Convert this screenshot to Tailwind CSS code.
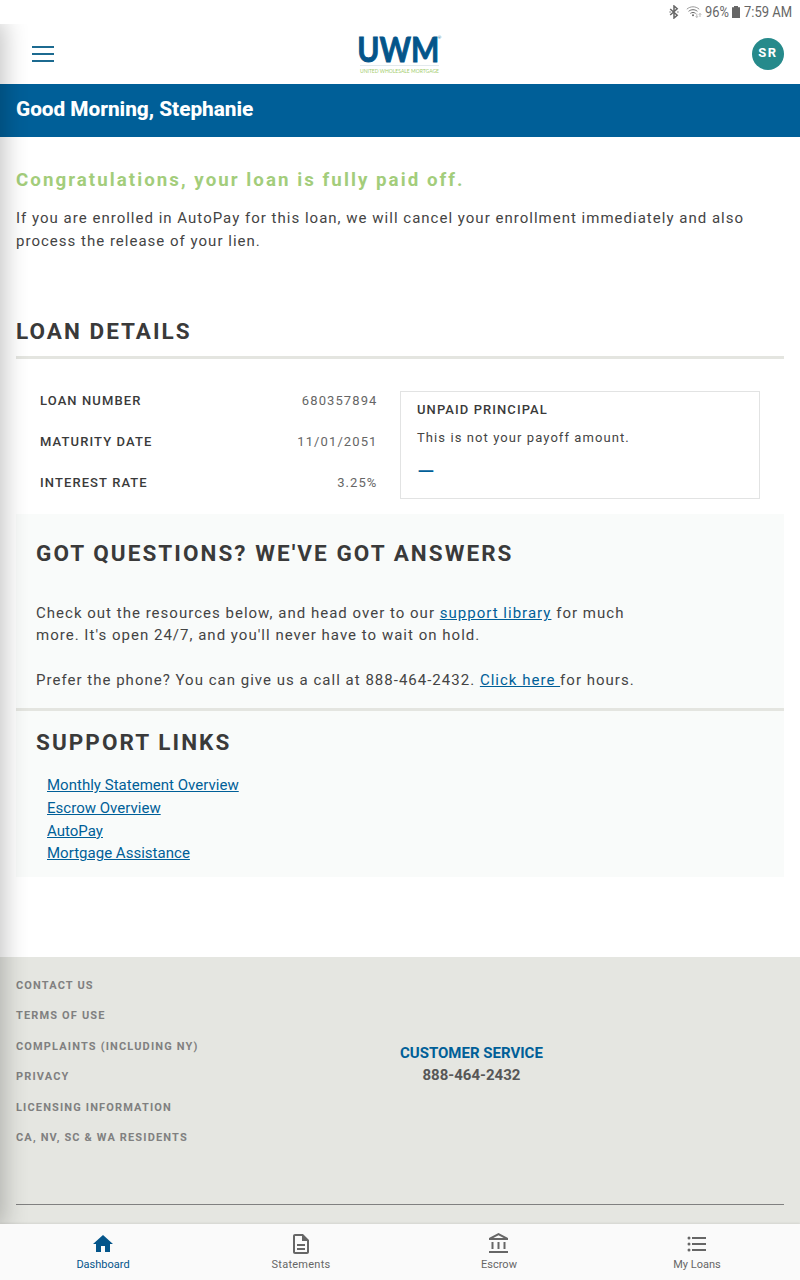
<!DOCTYPE html>
<html lang="en">
<head>
  <meta charset="UTF-8">
  <meta name="viewport" content="width=device-width, initial-scale=1.0">
  <title>UWM - Dashboard</title>
  <script src="https://cdn.jsdelivr.net/npm/@tailwindcss/browser@4"></script>
</head>
<body class="bg-white">
  <div class="relative flex flex-col w-[800px] h-[1280px] overflow-hidden font-['Roboto',sans-serif] text-[#3a3a3a]">

    <!-- Status bar -->
    <div class="flex h-6 shrink-0 items-center justify-end pr-2 text-[#666]">
      <svg class="w-[10px] h-[14px] mr-[7px]" viewBox="0 0 10 14" fill="none" stroke="currentColor" stroke-width="1.5">
        <path d="M1.2 4l7 6.2L5 13V1l3.2 2.8L1.2 10"/>
        <path d="M0.4 7h1.4M8.2 7h1.4" stroke-width="1.2"/>
      </svg>
      <svg class="w-4 h-[14px] mr-[3px]" viewBox="0 0 16 14" fill="none" stroke="currentColor" stroke-width="1">
        <path d="M0.8 4.2C4.5 1 9.5 1 13.2 4.2" stroke="#999"/>
        <path d="M2.6 6.3c2.6-2.1 6.2-2.1 8.8 0"/>
        <path d="M4.4 8.4c1.5-1.2 3.7-1.2 5.2 0"/>
        <circle cx="7" cy="10.3" r="1" fill="currentColor" stroke="none"/>
        <path d="M10.8 8.5v4M9.6 11.2l1.2 1.3 1.2-1.3M14 12V8.5M12.8 9.7L14 8.4l1.2 1.3" stroke="#aaa" stroke-width="0.8"/>
      </svg>
      <span class="inline-block w-6 text-[14px] leading-6 whitespace-nowrap"><span class="inline-block origin-left scale-x-[0.92]">96%</span></span>
      <svg class="w-2 h-3 ml-[3px] mr-1" viewBox="0 0 8 12" fill="currentColor"><path d="M2 0h4v1.2h2V12H0V1.2h2z"/></svg>
      <span class="inline-block w-12 text-[14px] leading-6 whitespace-nowrap"><span class="inline-block origin-left scale-x-[0.93]">7:59 AM</span></span>
    </div>

    <!-- Header -->
    <header class="flex h-[60px] shrink-0 items-center justify-between pl-8 pr-4">
      <div class="flex w-[22px] flex-col gap-[5px]">
        <span class="h-0.5 bg-[#1c6a90]"></span>
        <span class="h-0.5 bg-[#1c6a90]"></span>
        <span class="h-0.5 bg-[#1c6a90]"></span>
      </div>
      <svg class="w-[90px] h-[50px] -ml-[5px] overflow-visible" viewBox="-4 -5 90 50" font-family="Lato, sans-serif">
        <text x="-2.7" y="27.5" font-size="35" font-weight="700" fill="#04558a" stroke="#04558a" stroke-width="0.9" textLength="82" lengthAdjust="spacingAndGlyphs">UWM</text>
        <text x="77.5" y="5" font-size="4.5" fill="#04558a">®</text>
        <path d="M0 31.5h79" stroke="#d5dfe5" stroke-width="0.7"/>
        <text x="0" y="38.5" font-size="5.8" fill="#a2cd6c" textLength="79" lengthAdjust="spacingAndGlyphs">UNITED WHOLESALE MORTGAGE</text>
      </svg>
      <div class="flex size-8 items-center justify-center rounded-full bg-[#268a8b] pb-0.5 text-[13px] font-bold tracking-[1.5px] text-white">SR</div>
    </header>

    <div class="h-[53px] shrink-0 bg-[#005f98] px-4 pt-[10px] text-[20.8px] leading-[30px] font-extrabold tracking-[-0.03px] text-white">Good Morning, Stephanie</div>

    <main class="h-[820px] shrink-0 px-4 pt-[30px]">
      <h1 class="text-[18.72px] leading-[26px] font-bold tracking-[2.05px] text-[#a3cd7b]">Congratulations, your loan is fully paid off.</h1>
      <p class="mt-[14px] text-[15px] leading-[22.5px] tracking-[1.01px] whitespace-nowrap text-[#444]">If you are enrolled in AutoPay for this loan, we will cancel your enrollment immediately and also<br>process the release of your lien.</p>

      <h2 class="mt-[63px] h-[44px] border-b-[3px] border-[#e4e5e0] text-[22.5px] leading-[33px] font-bold tracking-[2.03px]">LOAN DETAILS</h2>
      <div class="flex h-[155px] justify-between px-6 pt-8">
        <div class="flex w-[337.5px] flex-col gap-[22px] text-[13px] leading-[19px] tracking-[1.1px]">
          <div class="flex justify-between"><span class="font-medium">LOAN NUMBER</span><span class="text-[#666]">680357894</span></div>
          <div class="flex justify-between"><span class="font-medium">MATURITY DATE</span><span class="text-[#666]">11/01/2051</span></div>
          <div class="flex justify-between"><span class="font-medium">INTEREST RATE</span><span class="text-[#666]">3.25%</span></div>
        </div>
        <div class="h-[108px] w-[360px] border border-[#e2e3e3] px-4 pt-2 text-[13px] leading-5 tracking-[1.08px]">
          <p class="font-medium">UNPAID PRINCIPAL</p>
          <p class="mt-2 text-[#444]">This is not your payoff amount.</p>
          <p class="mt-2 text-[22.5px] leading-[30px] tracking-normal text-[#005f98]">—</p>
        </div>
      </div>

      <section class="h-[363px] bg-[#f9fbfa]">
        <div class="h-[197px] border-b-[3px] border-[#e4e5e0] px-5 pt-[23px]">
          <h2 class="text-[22.5px] leading-[33px] font-bold tracking-[2.05px]">GOT QUESTIONS? WE'VE GOT ANSWERS</h2>
          <p class="mt-[32px] text-[15px] leading-[22.3px] tracking-[1.015px] text-[#444]">Check out the resources below, and head over to our <a class="text-[#005f98] underline">support library</a> for much<br>more. It's open 24/7, and you'll never have to wait on hold.<br><br>Prefer the phone? You can give us a call at 888-464-2432. <a class="text-[#005f98] underline">Click here </a>for hours.</p>
        </div>
        <h2 class="px-5 pt-[15px] text-[22.5px] leading-[33px] font-bold tracking-[2.05px]">SUPPORT LINKS</h2>
        <ul class="mt-[15.3px] pl-[31px] text-[15px] leading-[22.7px] tracking-[0.02px] text-[#005f98] underline">
          <li>Monthly Statement Overview</li>
          <li>Escrow Overview</li>
          <li>AutoPay</li>
          <li>Mortgage Assistance</li>
        </ul>
      </section>
    </main>

    <footer class="flex h-[267px] shrink-0 flex-col bg-[#e5e6e1] px-4">
      <div class="flex h-[248px] border-b border-[#808080]">
        <ul class="flex w-[384px] flex-col gap-[14.4px] pt-[21px] text-[11px] leading-4 font-bold tracking-[1.15px] text-[#808080]">
          <li>CONTACT US</li>
          <li>TERMS OF USE</li>
          <li>COMPLAINTS (INCLUDING NY)</li>
          <li>PRIVACY</li>
          <li>LICENSING INFORMATION</li>
          <li>CA, NV, SC &amp; WA RESIDENTS</li>
        </ul>
        <div class="pt-[85px] text-center text-[15px] leading-[22px] font-bold">
          <p class="text-[#005f98]">CUSTOMER SERVICE</p>
          <p class="text-[#575757]">888-464-2432</p>
        </div>
      </div>
    </footer>

    <!-- Drawer shadow -->
    <div class="pointer-events-none absolute top-6 bottom-14 left-0 w-8 overflow-hidden">
      <div class="absolute inset-y-0 -left-10 w-10 shadow-[0_0_24px_4px_rgba(0,0,0,0.24)]"></div>
    </div>

    <!-- Tab bar -->
    <nav class="relative grid h-14 shrink-0 grid-cols-4 bg-[#fafafa] px-1 text-[11px] leading-[14px] text-[#666] shadow-[0_-1px_2px_rgba(0,0,0,0.08)]">
      <div class="flex flex-col items-center pt-2 text-[#04558a]">
        <svg class="size-6" viewBox="0 0 24 24" fill="currentColor"><path d="M10 20v-6h4v6h5v-8h3L12 3 2 12h3v8z"/></svg>
        <span class="mt-0.5">Dashboard</span>
      </div>
      <div class="flex flex-col items-center pt-2">
        <svg class="size-6" viewBox="0 0 24 24" fill="currentColor"><path d="M8 16h8v2H8zm0-4h8v2H8zm6-10H6c-1.1 0-2 .9-2 2v16c0 1.1.89 2 1.99 2H18c1.1 0 2-.9 2-2V8l-6-6zm4 18H6V4h7v5h5v11z"/></svg>
        <span class="mt-0.5 tracking-[0.25px]">Statements</span>
      </div>
      <div class="flex flex-col items-center pt-2">
        <svg class="size-6" viewBox="0 0 24 24" fill="currentColor"><path d="M6.5 10h-2v7h2v-7zm6 0h-2v7h2v-7zm8.5 9H2v2h19v-2zm-2.5-9h-2v7h2v-7zm-7-6.74L16.71 6H6.29l5.21-2.74m0-2.26L2 6v2h19V6l-9.5-5z"/></svg>
        <span class="mt-0.5">Escrow</span>
      </div>
      <div class="flex flex-col items-center pt-2">
        <svg class="size-6" viewBox="0 0 24 24" fill="currentColor"><path d="M7 5h14v2H7zM7 11h14v2H7zM7 17h14v2H7z"/><circle cx="4" cy="6" r="1.5"/><circle cx="4" cy="12" r="1.5"/><circle cx="4" cy="18" r="1.5"/></svg>
        <span class="mt-0.5">My Loans</span>
      </div>
    </nav>
  </div>
</body>
</html>
